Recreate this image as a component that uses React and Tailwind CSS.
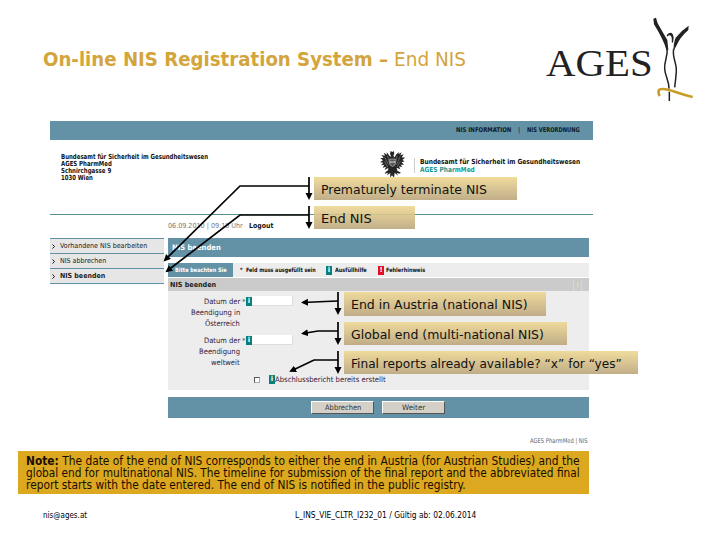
import { useLayoutEffect, useRef, useState } from "react";

// Condenses or expands a single line so that it fills its column.
function Line({ w, className = "", children }) {
  const ref = useRef(null);
  const [scale, setScale] = useState(1);
  useLayoutEffect(() => {
    setScale(w / ref.current.offsetWidth);
  }, [w]);
  return (
    <div className={"shrink-0 whitespace-nowrap " + className} style={{ width: w }}>
      <span ref={ref} className="inline-block origin-left" style={{ transform: `scaleX(${scale})` }}>
        {children}
      </span>
    </div>
  );
}

function Logo() {
  return (
    <div className="flex h-[115px] w-[200px] pl-[26px] pt-[42px]">
      <Line w={107} className="h-[44px] font-['Liberation_Serif',serif] text-[37px] leading-[44px] text-[#222]">AGES</Line>
      <svg className="-mt-[26px] h-[90px] w-[44px] shrink-0" viewBox="387 48 132 270" fill="none">
        <path d="M388 56 L396 53 L401 70 Q416 97 430 120 L433 151 L427 149 Q419 120 390 73 Z M494 77 L493 90 Q467 113 458 136 L449 152 Q448 128 455 113 Q470 93 494 77 Z" fill="#222" />
        <path d="M428 106 Q434 96 443 99 Q452 106 447 128 L443 127 Q445 112 440 107 Q435 104 430 110 Z" fill="#222" />
        <path d="M429 143 C433 172 420 181 422 207 C424 230 435 241 435 266 M449 146 C444 178 460 189 457 215 Q455 240 452 262 M436 275 V303" stroke="#222" strokeWidth="4.5" />
        <path d="M407 288 C400 276 403 267 413 267 C435 265 453 278 506 291" stroke="#c99c25" strokeWidth="8" />
      </svg>
    </div>
  );
}

function Eagle() {
  return (
    <svg className="h-[28px] w-[25px] shrink-0" viewBox="0 0 75 84" fill="#252525">
      <path d="M30 11 L32 3 L37 6 L41 3 L43 10 L40 18 L44 22 L49 13 L58 6 L55 13 L65 7 L61 16 L71 13 L65 22 L75 23 L67 30 L74 34 L65 37 L72 44 L62 44 L67 52 L57 49 L61 58 L50 53 L52 62 L63 68 L57 71 L50 68 L54 77 L44 68 L42 83 L36 76 L30 83 L31 69 L21 76 L24 68 L14 71 L17 66 L24 61 L25 54 L14 60 L18 50 L8 53 L13 44 L3 46 L10 38 L0 37 L9 31 L1 25 L11 23 L4 15 L15 17 L11 8 L21 14 L20 6 L28 17 L34 21 Z" />
      <path d="M14 21 L25 43 M23 17 L29 42 M60 20 L50 44 M51 18 L46 42 M14 34 L23 51 M61 34 L51 51" stroke="#ddd" strokeWidth="1" />
      <path d="M29 27 L46 27 L45 45 Q38 54 30 45 Z" fill="#555" stroke="#ddd" strokeWidth="1.5" />
      <path d="M29 36 H46" stroke="#ddd" strokeWidth="3" />
    </svg>
  );
}

function Badge({ alert }) {
  return (
    <span className={(alert ? "bg-[#e01020]" : "bg-[#087f7b]") + " flex h-[9px] w-[6px] shrink-0 items-center justify-center text-[7px] font-bold leading-none text-white"}>
      {alert ? "!" : "i"}
    </span>
  );
}

function MenuRow({ w, bold, children }) {
  return (
    <div className="flex h-[15px] items-center border-b border-[#6391a5] bg-[#e6e6e6] pl-[1.5px]">
      <svg className="mr-[4px] h-[5px] w-[4px]" viewBox="0 0 4 5"><path d="M0.5 0.5 L2.5 2.5 L0.5 4.5" fill="none" stroke="#111" /></svg>
      <Line w={w} className={bold ? "font-bold" : ""}>{children}</Line>
    </div>
  );
}

function DateField({ lines }) {
  return (
    <div className="flex h-[39px] items-start">
      <div className="flex w-[72px] flex-col items-end text-[7.5px] leading-[11.2px] text-[#30203c]">
        {lines.map(([t, w]) => <Line key={t} w={w}>{t}</Line>)}
      </div>
      <span className="w-[6px] pl-[2px] pt-[1px] text-[7px] leading-[10px] text-[#555]">*</span>
      <div className="flex items-center"><Badge /><div className="h-[10px] w-[41px] border-b border-r border-[#ddd] bg-white" /></div>
    </div>
  );
}

function Button({ w, children }) {
  return (
    <div className="flex h-[13px] w-[63px] items-center justify-center border border-b-[#555] border-l-white border-r-[#555] border-t-white bg-[#d4d0c8] text-[7.5px] text-[#333]">
      <Line w={w}>{children}</Line>
    </div>
  );
}

function Callout({ pos, w, children }) {
  return (
    <div className={"absolute flex items-center bg-linear-to-b from-[#efd892]/90 to-[#b9a47a]/88 pl-[7px] pt-px text-[13px] leading-none text-[#111] " + pos}>
      <Line w={w}>{children}</Line>
    </div>
  );
}

function Arrows() {
  const paths = [
    "M309 186 H240 L165 260", "M309 215 H240 L167 271",
    "M338 301 L325 301.5 L303 302.5", "M338 331 H318 L303 333.5", "M338 360 H314 L291 371",
    "M309 177 V198", "M309 206 V227", "M338 292 V313", "M338 322 V343", "M338 351 V372",
  ];
  return (
    <svg className="absolute left-0 top-0 h-[540px] w-[720px]" viewBox="0 0 720 540">
      <defs>
        <marker id="tip" markerUnits="userSpaceOnUse" markerWidth="8" markerHeight="8" refX="5" refY="3.5" orient="auto">
          <path d="M0 0 L7 3.5 L0 7 Z" />
        </marker>
      </defs>
      {paths.map((d) => <path key={d} d={d} fill="none" stroke="#000" strokeWidth="1.7" markerEnd="url(#tip)" />)}
    </svg>
  );
}

function Site() {
  return (
    <div className="ml-[50px] w-[543px] text-[7px] leading-none text-[#222]">
      <div className="flex h-[19px] items-center bg-[#6391a5] pl-[406px] text-[6.5px] font-bold text-[#101820]">
        <Line w={55}>NIS INFORMATION</Line>
        <span className="w-[16px] text-center font-normal">|</span>
        <Line w={53}>NIS VERORDNUNG</Line>
      </div>
      <div className="flex h-[75px] items-start border-b border-[#5a9090] pt-[10px]">
        <div className="ml-[11px] mt-[4px] w-[319px] font-bold leading-[7.1px] text-[#111]">
          <Line w={147}>Bundesamt für Sicherheit im Gesundheitswesen</Line>
          <Line w={51}>AGES PharmMed</Line>
          <Line w={50}>Schnirchgasse 9</Line>
          <Line w={32}>1030 Wien</Line>
        </div>
        <Eagle />
        <div className="ml-[9px] mt-[8px] h-[15px] border-l border-[#ccc] pl-[5px] font-bold leading-[8px] text-[#111]">
          <Line w={160}>Bundesamt für Sicherheit im Gesundheitswesen</Line>
          <Line w={55} className="text-[#169990]">AGES PharmMed</Line>
        </div>
      </div>
      <div className="flex h-[23px] items-center pl-[118px]">
        <Line w={75} className="text-[#777]">06.09.2010 | 09:10 Uhr</Line>
        <Line w={24} className="ml-[6px] font-bold text-[#111]">Logout</Line>
      </div>
      <div className="flex w-[539px] items-start gap-[4px]">
        <nav className="w-[114px] shrink-0 border-t border-[#6391a5]">
          <MenuRow w={87}>Vorhandene NIS bearbeiten</MenuRow>
          <MenuRow w={46}>NIS abbrechen</MenuRow>
          <MenuRow w={45} bold>NIS beenden</MenuRow>
        </nav>
        <main className="w-[421px] shrink-0">
          <div className="flex h-[19px] items-center bg-[#6391a5] pl-[4px] pt-px text-[7.5px] font-bold text-white"><Line w={49}>NIS beenden</Line></div>
          <div className="mt-[6px] flex h-[14px] items-center bg-[#ededed] text-[6px] font-bold text-[#111]">
            <div className="flex h-full w-[65px] items-center bg-[#6391a5] pl-[7px] text-white"><Line w={52}>Bitte beachten Sie</Line></div>
            <Line w={76} className="ml-[7px] mr-[10px]">*&nbsp; Feld muss ausgefüllt sein</Line>
            <Badge /><Line w={32} className="ml-[3px] mr-[11px]">Ausfüllhilfe</Line>
            <Badge alert /><Line w={39} className="ml-[2px]">Fehlerhinweis</Line>
          </div>
          <div className="mt-[1px] flex h-[13px] items-center justify-between bg-[#cbcbcb] pl-[2px] pr-[7px] pt-px font-bold">
            <Line w={46}>NIS beenden</Line>
            <div className="flex h-[11px] w-[9px] items-center justify-center border-x border-[#dddca8] text-[6px] text-[#e5e3a5]">i</div>
          </div>
          <div className="h-[99px] bg-[#ededed] pt-[5px]">
            <DateField lines={[["Datum der", 36], ["Beendigung in", 49], ["Österreich", 35]]} />
            <DateField lines={[["Datum der", 36], ["Beendigung", 41], ["weltweit", 29]]} />
            <div className="ml-[86px] mt-[1px] flex h-[9px] items-center text-[7.5px] text-[#30203c]">
              <div className="mr-[9px] h-[6px] w-[6px] border border-b-[#aaa] border-l-[#555] border-r-[#aaa] border-t-[#555] bg-white" />
              <Badge /><Line w={111}>Abschlussbericht bereits erstellt</Line>
            </div>
          </div>
          <div className="mt-[7px] flex h-[21px] items-center gap-[8px] bg-[#6391a5] pl-[143px]">
            <Button w={36}>Abbrechen</Button>
            <Button w={23}>Weiter</Button>
          </div>
          <div className="flex h-[33px] justify-end pr-[1px] pt-[20px] text-[6.5px] text-[#666]"><Line w={58}>AGES PharmMed | NIS</Line></div>
        </main>
      </div>
    </div>
  );
}

export default function App() {
  return (
    <div className="relative h-[540px] w-[720px] overflow-hidden bg-white font-['DejaVu_Sans',sans-serif]">
      <header className="flex h-[121px] items-start">
        <h1 className="flex w-[520px] shrink-0 pl-[43px] pt-[47px] text-[19px] leading-[25px] text-[#d3a53c]">
          <Line w={345} className="font-bold">On-line NIS Registration System –</Line>
          <Line w={72} className="ml-[6px]">End NIS</Line>
        </h1>
        <Logo />
      </header>
      <Site />
      <div className="ml-[18px] h-[43px] w-[571px] bg-[#dba81f] pl-[8px] pt-[4px] text-[11.5px] leading-[12px] text-[#180d00]">
        <Line w={553}><b>Note:</b> The date of the end of NIS corresponds to either the end in Austria (for Austrian Studies) and the</Line>
        <Line w={554}>global end for multinational NIS. The timeline for submission of the final report and the abbreviated final</Line>
        <Line w={440}>report starts with the date entered. The end of NIS is notified in the public registry.</Line>
      </div>
      <footer className="flex pl-[43px] pt-[17px] text-[8px] leading-[10px] text-black">
        <Line w={44} className="mr-[208px]">nis@ages.at</Line>
        <Line w={181}>L_INS_VIE_CLTR_I232_01 / Gültig ab: 02.06.2014</Line>
      </footer>
      <Callout pos="left-[314px] top-[177px] h-[23px] w-[203px]" w={166}>Prematurely terminate NIS</Callout>
      <Callout pos="left-[314px] top-[206px] h-[23px] w-[101px]" w={51}>End NIS</Callout>
      <Callout pos="left-[344px] top-[292px] h-[24px] w-[202px]" w={177}>End in Austria (national NIS)</Callout>
      <Callout pos="left-[344px] top-[322px] h-[23px] w-[223px]" w={193}>Global end (multi-national NIS)</Callout>
      <Callout pos="left-[344px] top-[351px] h-[23px] w-[294px]" w={271}>Final reports already available? “x” for “yes”</Callout>
      <Arrows />
    </div>
  );
}
